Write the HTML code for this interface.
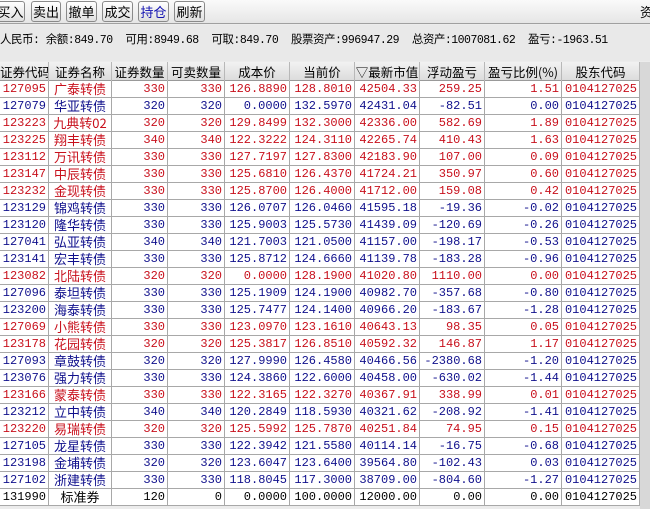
<!DOCTYPE html>
<html><head><meta charset="utf-8"><style>
*{margin:0;padding:0;box-sizing:border-box}
body{width:650px;height:509px;overflow:hidden;background:#ececec;font-family:"Liberation Mono","Noto Sans CJK SC",monospace;font-size:12px;position:relative}
.tb{position:absolute;left:0;top:0;width:650px;height:24px;background:linear-gradient(#fafafa,#e6e6e6);border-bottom:1px solid #a0a0a0;overflow:hidden}
.btn{position:absolute;top:1px;height:21px;border:1px solid #8a8a8a;border-radius:3px;background:linear-gradient(#fff,#e0e0e0);font-family:"Noto Sans CJK SC",sans-serif;font-size:13px;line-height:19px;text-align:center;color:#000}
.info{position:absolute;left:0;top:25px;width:650px;height:36px;background:#e9e9e9;line-height:30px;white-space:pre;font-family:"Liberation Mono","Noto Sans CJK SC",monospace;font-size:11.5px;letter-spacing:-0.5px;overflow:hidden;padding-top:1px}
.grid{position:absolute;left:0;top:62px;width:640px}
.hd{position:absolute;left:0;top:0;height:19px;width:640px;background:linear-gradient(#f2f2f2,#dcdcdc);border-bottom:1px solid #999}
.hd span{position:absolute;top:0;line-height:19px;text-align:center;font-family:"Noto Sans CJK SC",sans-serif;font-size:12.5px;border-right:1px solid #b8b8b8;height:19px;white-space:nowrap;overflow:hidden}
.row{position:absolute;left:0;height:17px;width:640px;background:#fff;border-bottom:1px solid #a8a8a8}
.row span{position:absolute;top:0;height:17px;line-height:17px;text-align:right;border-right:1px solid #a8a8a8;padding-right:2px;white-space:nowrap;overflow:hidden}
.row span.n{text-align:center;font-family:"Noto Sans CJK SC",sans-serif;font-size:13px;line-height:16px;padding:0}
.r{color:#c8101c}.b{color:#10108c}.k{color:#000}
.side{position:absolute;left:640px;top:62px;width:10px;height:447px;background:#d8d8d8}
</style></head><body>
<div class="tb">
<div class="btn" style="left:-4px;width:29px">买入</div>
<div class="btn" style="left:31px;width:30px">卖出</div>
<div class="btn" style="left:66px;width:31px">撤单</div>
<div class="btn" style="left:102px;width:31px">成交</div>
<div class="btn" style="left:138px;width:31px;color:#1010b0">持仓</div>
<div class="btn" style="left:174px;width:31px">刷新</div>
<div style="position:absolute;left:640px;top:2px;font-family:'Noto Sans CJK SC';font-size:13px">资</div>
</div>
<div class="info">人民币: 余额:849.70  可用:8949.68  可取:849.70  股票资产:996947.29  总资产:1007081.62  盈亏:-1963.51</div>
<div class="side"></div>
<div class="grid" id="g">
<div class="hd">
<span style="left:0;width:49px;text-align:right">证券代码</span><span style="left:49px;width:63px">证券名称</span><span style="left:112px;width:56px">证券数量</span><span style="left:168px;width:57px">可卖数量</span><span style="left:225px;width:65px">成本价</span><span style="left:290px;width:65px">当前价</span><span style="left:355px;width:65px">▽最新市值</span><span style="left:420px;width:65px">浮动盈亏</span><span style="left:485px;width:77px">盈亏比例(%)</span><span style="left:562px;width:78px">股东代码</span>
</div>
</div>
<script>
var d=[["127095","广泰转债",330,330,"126.8890","128.8010","42504.33","259.25","1.51"],
["127079","华亚转债",320,320,"0.0000","132.5970","42431.04","-82.51","0.00"],
["123223","九典转02",320,320,"129.8499","132.3000","42336.00","582.69","1.89"],
["123225","翔丰转债",340,340,"122.3222","124.3110","42265.74","410.43","1.63"],
["123112","万讯转债",330,330,"127.7197","127.8300","42183.90","107.00","0.09"],
["123147","中辰转债",330,330,"125.6810","126.4370","41724.21","350.97","0.60"],
["123232","金现转债",330,330,"125.8700","126.4000","41712.00","159.08","0.42"],
["123129","锦鸡转债",330,330,"126.0707","126.0460","41595.18","-19.36","-0.02"],
["123120","隆华转债",330,330,"125.9003","125.5730","41439.09","-120.69","-0.26"],
["127041","弘亚转债",340,340,"121.7003","121.0500","41157.00","-198.17","-0.53"],
["123141","宏丰转债",330,330,"125.8712","124.6660","41139.78","-183.28","-0.96"],
["123082","北陆转债",320,320,"0.0000","128.1900","41020.80","1110.00","0.00"],
["127096","泰坦转债",330,330,"125.1909","124.1900","40982.70","-357.68","-0.80"],
["123200","海泰转债",330,330,"125.7477","124.1400","40966.20","-183.67","-1.28"],
["127069","小熊转债",330,330,"123.0970","123.1610","40643.13","98.35","0.05"],
["123178","花园转债",320,320,"125.3817","126.8510","40592.32","146.87","1.17"],
["127093","章鼓转债",320,320,"127.9990","126.4580","40466.56","-2380.68","-1.20"],
["123076","强力转债",330,330,"124.3860","122.6000","40458.00","-630.02","-1.44"],
["123166","蒙泰转债",330,330,"122.3165","122.3270","40367.91","338.99","0.01"],
["123212","立中转债",340,340,"120.2849","118.5930","40321.62","-208.92","-1.41"],
["123220","易瑞转债",320,320,"125.5992","125.7870","40251.84","74.95","0.15"],
["127105","龙星转债",330,330,"122.3942","121.5580","40114.14","-16.75","-0.68"],
["123198","金埔转债",320,320,"123.6047","123.6400","39564.80","-102.43","0.03"],
["127102","浙建转债",330,330,"118.8045","117.3000","38709.00","-804.60","-1.27"],
["131990","标准券",120,0,"0.0000","100.0000","12000.00","0.00","0.00"]];
var L=[0,49,112,168,225,290,355,420,485,562,640],h="";
d.forEach(function(r,i){var c=i==24?"k":(parseFloat(r[7])>0?"r":"b");
h+='<div class="row '+c+'" style="top:'+(19+i*17)+'px">';
var v=[r[0],r[1],r[2],r[3],r[4],r[5],r[6],r[7],r[8],"0104127025"];
for(var j=0;j<10;j++)h+='<span'+(j==1?' class="n"':'')+' style="left:'+L[j]+'px;width:'+(L[j+1]-L[j])+'px">'+v[j]+'</span>';
h+='</div>';});
document.getElementById("g").insertAdjacentHTML("beforeend",h);
</script>
</body></html>
